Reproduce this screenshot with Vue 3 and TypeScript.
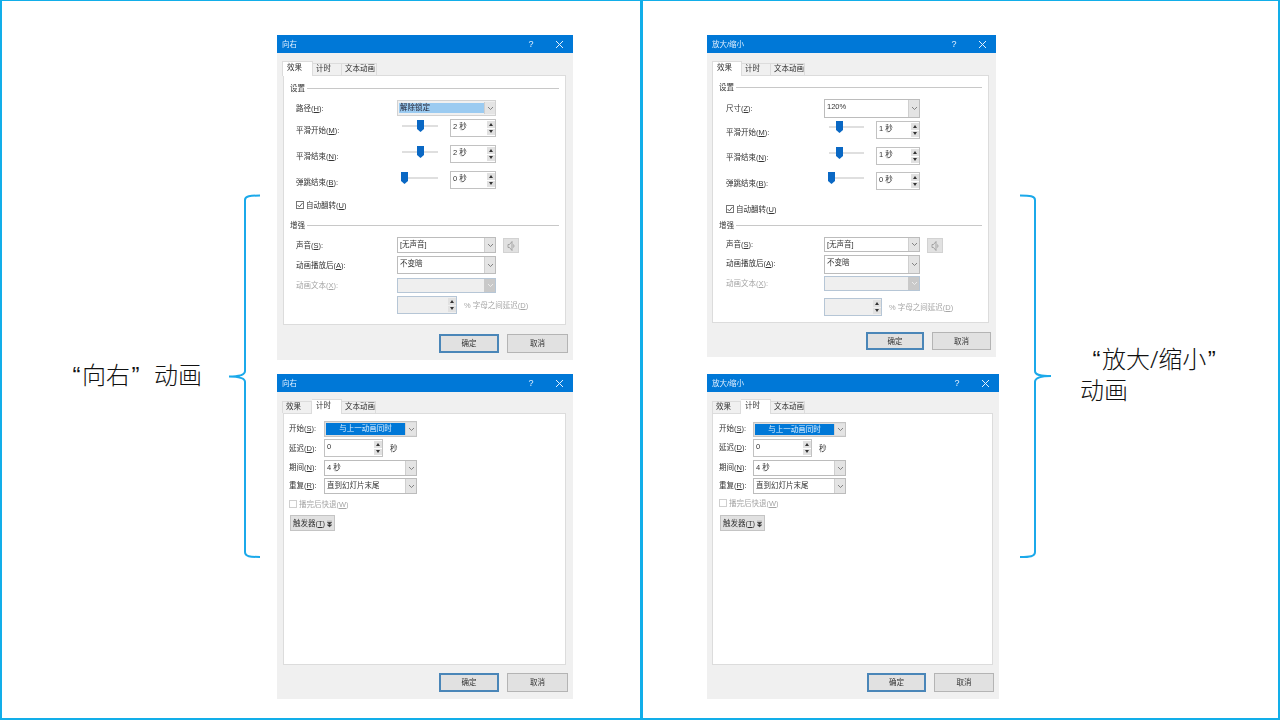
<script setup lang="ts">
type Row = {
  t: 'group' | 'combo' | 'slider' | 'check' | 'spin' | 'button'
  y: number
  h: number
  text?: string
  label?: string
  key?: string
  lab?: number
  value?: string
  kind?: 'plain' | 'sel' | 'blue' | 'off'
  w?: number
  off?: boolean
  checked?: boolean
  speaker?: boolean
  pos?: number
  trk?: number
  after?: string
  spinW?: number
}
type Dialog = {
  cls: string
  title: string
  active: number
  tabW: number[]
  panelH: number
  panelY: number
  rows: Row[]
  lx: number
  cx: number
  gx: number
  sliderW: number
  sliderGapL: number
  sliderGapR: number
  btnY: number
  btnH: number
  okW: number
  noW: number
}

const effect = (c: {
  path: Row
  y: number[]
  lab: number[]
  pos: number[]
  val: string[]
  trk: number
  check: number
  e: number[]
  labs: number[]
  wide: number
  spinX: number
  comboH: number[]
}): Row[] => [
  { t: 'group', text: '设置', y: c.e[0], h: 10 },
  c.path,
  ...c.y.map((y, i): Row => ({
    t: 'slider', y, h: 18,
    label: ['平滑开始', '平滑结束', '弹跳结束'][i],
    key: ['M', 'N', 'B'][i],
    lab: c.lab[i], pos: c.pos[i], value: c.val[i], trk: c.trk, w: c.wide,
  })),
  { t: 'check', y: c.check - 5, h: 10, label: '自动翻转', key: 'U', checked: true },
  { t: 'group', text: '增强', y: c.e[1], h: 10 },
  { t: 'combo', y: c.e[2], h: c.comboH[0], label: '声音', key: 'S', lab: c.labs[0], value: '[无声音]', kind: 'plain', speaker: true },
  { t: 'combo', y: c.e[3], h: c.comboH[1], label: '动画播放后', key: 'A', lab: c.labs[1], value: '不变暗', kind: 'plain' },
  { t: 'combo', y: c.e[4], h: c.comboH[2], label: '动画文本', key: 'X', lab: c.labs[2], value: '', kind: 'off', off: true },
  { t: 'spin', y: c.e[5], h: 18, label: '', lab: c.e[5] + 9, value: '', off: true, spinW: c.spinX, after: '% 字母之间延迟', key: 'D' },
]

const timing = (ys: number[], labs: number[]): Row[] => [
  { t: 'combo', y: ys[0], h: ys[1], label: '开始', key: 'S', lab: labs[0], value: '与上一动画同时', kind: 'blue' },
  { t: 'spin', y: ys[2], h: 18, label: '延迟', key: 'D', lab: labs[1], value: '0', spinW: 59, after: '秒' },
  { t: 'combo', y: ys[3], h: 16, label: '期间', key: 'N', lab: labs[2], value: '4 秒', kind: 'plain' },
  { t: 'combo', y: ys[4], h: 16, label: '重复', key: 'R', lab: labs[3], value: '直到幻灯片末尾', kind: 'plain' },
  { t: 'check', y: ys[5], h: 10, label: '播完后快退', key: 'W', off: true },
  { t: 'button', y: ys[6], h: 16, label: '触发器', key: 'T' },
]

const dialogs: Dialog[] = [
  {
    cls: 'd-a', title: '向右', active: 0, tabW: [31, 29, 35], panelY: 75, panelH: 250,
    lx: 13, cx: 114, gx: 7, sliderW: 36, sliderGapL: 5, sliderGapR: 12,
    btnY: 334, btnH: 19, okW: 60, noW: 61,
    rows: effect({
      path: { t: 'combo', y: 100, h: 16, label: '路径', key: 'H', lab: 108, value: '解除锁定', kind: 'sel' },
      y: [119, 145, 171], lab: [130, 156, 182], pos: [50, 50, 8], val: ['2 秒', '2 秒', '0 秒'], trk: 6,
      check: 205, e: [83, 220, 237, 256, 278, 296], labs: [245, 265, 285], wide: 46, spinX: 60, comboH: [16, 18, 15],
    }),
  },
  {
    cls: 'd-b', title: '向右', active: 1, tabW: [30, 30, 34], panelY: 413, panelH: 252,
    lx: 6, cx: 41, gx: 7, sliderW: 36, sliderGapL: 5, sliderGapR: 12,
    btnY: 673, btnH: 19, okW: 60, noW: 61,
    rows: timing([421, 16, 439, 460, 478, 499, 515], [428, 448, 467, 485]),
  },
  {
    cls: 'd-c', title: '放大/缩小', active: 0, tabW: [30, 29, 34], panelY: 75, panelH: 248,
    lx: 14, cx: 112, gx: 7, sliderW: 35, sliderGapL: 5, sliderGapR: 12,
    btnY: 332, btnH: 18, okW: 58, noW: 59,
    rows: effect({
      path: { t: 'combo', y: 99, h: 19, label: '尺寸', key: 'Z', lab: 108, value: '120%', kind: 'plain' },
      y: [121, 147, 172], lab: [132, 157, 183], pos: [30, 30, 8], val: ['1 秒', '1 秒', '0 秒'], trk: 5,
      check: 209, e: [82, 220, 237, 255, 276, 298], labs: [244, 263, 283], wide: 44, spinX: 58, comboH: [15, 19, 15],
    }),
  },
  {
    cls: 'd-d', title: '放大/缩小', active: 1, tabW: [29, 30, 34], panelY: 413, panelH: 252,
    lx: 7, cx: 41, gx: 7, sliderW: 36, sliderGapL: 5, sliderGapR: 12,
    btnY: 673, btnH: 19, okW: 59, noW: 60,
    rows: timing([422, 15, 439, 460, 478, 498, 515], [428, 447, 467, 485]),
  },
]

const tabs = ['效果', '计时', '文本动画']

const gap = (d: Dialog, i: number): number => {
  const prev = i === 0 ? d.panelY + 1 : d.rows[i - 1].y + d.rows[i - 1].h
  return d.rows[i].y - prev
}
const rowStyle = (d: Dialog, i: number) => ({
  marginTop: `${gap(d, i)}px`,
  height: `${d.rows[i].h}px`,
  paddingLeft: `${d.rows[i].t === 'group' ? d.gx - 1 : d.lx - 1}px`,
})
const footGap = (d: Dialog): number => d.btnY - (d.panelY + d.panelH)
const labTop = (r: Row): string => `${(r.lab ?? r.y + 5) - r.y - 4}px`
const labW = (d: Dialog): string => `${d.cx - d.lx}px`
</script>

<template>
  <div class="slide">
    <div class="pane pane-left"></div>
    <div class="pane pane-right"></div>

    <svg class="braces" width="1280" height="720" viewBox="0 0 1280 720">
      <path d="M260 195.500 C250 195.500 245 196 245 200 L245 371 C245 375 240 376.500 229 376.500 C240 376.500 245 378 245 382 L245 552 C245 556.500 250 557 260 557" />
      <path d="M1020 195.500 C1030 195.500 1035 196 1035 200 L1035 371 C1035 375 1040 376 1051 376 C1040 376 1035 378 1035 382 L1035 552 C1035 556.500 1030 557 1020 557" />
    </svg>

    <div class="caption cap-left"><span class="q">“</span>向右<span class="q">”</span><span class="word-gap">动画</span></div>
    <div class="caption cap-right"><span class="indent"><span class="q">“</span>放大/缩小<span class="q">”</span></span><br />动画</div>

    <section v-for="d in dialogs" :key="d.cls" class="dialog" :class="d.cls">
      <header class="titlebar">
        <span class="title">{{ d.title }}</span>
        <span class="tb-btn">?</span>
        <span class="tb-btn">
          <svg width="9" height="9" viewBox="0 0 9 9"><path d="M1 1 L8 8 M8 1 L1 8" /></svg>
        </span>
      </header>

      <nav class="tabs">
        <span
          v-for="(tab, i) in tabs"
          :key="tab"
          class="tab"
          :class="{ on: d.active === i }"
          :style="{ width: d.tabW[i] + 'px' }"
        >{{ tab }}</span>
      </nav>

      <div class="panel" :style="{ height: d.panelH + 'px' }">
        <div v-for="(r, i) in d.rows" :key="i" class="row" :style="rowStyle(d, i)">
          <template v-if="r.t === 'group'">
            <span class="group-text">{{ r.text }}</span>
            <span class="group-line"></span>
          </template>

          <template v-else-if="r.t === 'check'">
            <span class="check" :class="{ dim: r.off }">
              <svg v-if="r.checked" width="6" height="6" viewBox="0 0 6 6"><path d="M0.600 3 L2.400 4.900 L5.500 1" /></svg>
            </span>
            <span class="lab low" :class="{ dim: r.off }">{{ r.label }}(<u>{{ r.key }}</u>)</span>
          </template>

          <button v-else-if="r.t === 'button'" class="trigger" type="button">
            <span class="trigger-text">{{ r.label }}(<u>{{ r.key }}</u>)</span>
            <svg width="5" height="8" viewBox="0 0 6 8">
              <path d="M0 0.500 H6 M0 2 H6 L3 4.500 Z M0 5 H6 L3 7.500 Z" />
            </svg>
          </button>

          <template v-else>
            <span class="lab fixed" :class="{ dim: r.off }" :style="{ width: labW(d), marginTop: labTop(r) }">
              <template v-if="r.label">{{ r.label }}(<u>{{ r.key }}</u>):</template>
            </span>

            <div v-if="r.t === 'combo'" class="combo" :class="'k-' + r.kind">
              <span class="combo-val">{{ r.value }}</span>
              <span class="combo-arrow">
                <svg width="7" height="5" viewBox="0 0 7 5"><path d="M1 1 L3.500 3.500 L6 1" /></svg>
              </span>
            </div>
            <span v-if="r.speaker" class="speaker">
              <svg width="10" height="12" viewBox="0 0 10 12">
                <path d="M6 1.500 V10.500 M6 1.500 L3.500 4.500 H2 V7.500 H3.500 L6 10.500 M7.500 4.500 Q8.500 6 7.500 7.500" />
              </svg>
            </span>

            <template v-if="r.t === 'slider'">
              <div
                class="slider"
                :style="{ width: d.sliderW + 'px', marginLeft: d.sliderGapL + 'px', marginRight: d.sliderGapR + 'px', marginTop: r.trk + 'px' }"
              >
                <svg class="thumb" :style="{ left: r.pos + '%' }" width="7" height="12" viewBox="0 0 7 12">
                  <path d="M0 0 H7 V9 L3.500 12 L0 9 Z" />
                </svg>
              </div>
            </template>

            <div
              v-if="r.t === 'slider' || r.t === 'spin'"
              class="spin"
              :class="{ off: r.off }"
              :style="{ width: (r.t === 'spin' ? r.spinW : r.w) + 'px' }"
            >
              <span class="spin-val">{{ r.value }}</span>
              <span class="spin-btns">
                <span class="sb"><i class="up"></i></span>
                <span class="sb"><i class="down"></i></span>
              </span>
            </div>

            <span v-if="r.after" class="after" :class="{ dim: r.off }">
              {{ r.after }}<template v-if="r.off">(<u>{{ r.key }}</u>)</template>
            </span>
          </template>
        </div>
      </div>

      <footer class="foot" :style="{ marginTop: footGap(d) + 'px' }">
        <button class="btn ok" type="button" :style="{ width: d.okW + 'px', height: d.btnH + 'px' }">确定</button>
        <button class="btn" type="button" :style="{ width: d.noW + 'px', height: d.btnH + 'px' }">取消</button>
      </footer>
    </section>
  </div>
</template>

<style scoped>
* { box-sizing: border-box; }
.slide {
  position: relative;
  display: flex;
  width: 1280px;
  height: 720px;
  overflow: hidden;
  background: #fff;
  font-family: "Liberation Sans", "Noto Sans CJK SC", sans-serif;
  font-size: 7.500px;
  line-height: 10px;
  color: #333;
}
.pane { height: 720px; border-style: solid; border-color: #12aee9; }
.pane-left { width: 643px; border-width: 1px 3px 2px 2px; }
.pane-right { width: 637px; border-width: 1px 2px 2px 0; }

.braces { position: absolute; left: 0; top: 0; }
.braces path { fill: none; stroke: #1ba9ea; stroke-width: 2; }

.caption {
  position: absolute;
  font-family: "Noto Sans", "Noto Sans CJK SC", sans-serif;
  font-weight: 300;
  font-size: 24px;
  line-height: 30px;
  color: #111;
  white-space: nowrap;
}
.q { font-family: "Liberation Sans", sans-serif; padding: 0 1.500px; }
.cap-left { left: 71px; top: 360px; }
.cap-right { left: 1080px; top: 344px; }
.indent { margin-left: 11px; }
.word-gap { margin-left: 13px; }

.dialog { position: absolute; background: #f0f0f0; filter: blur(0.3px); }
.d-a { left: 277px; top: 35px; width: 296px; height: 325px; }
.d-b { left: 277px; top: 374px; width: 296px; height: 325px; }
.d-c { left: 707px; top: 35px; width: 289px; height: 322px; }
.d-d { left: 707px; top: 374px; width: 292px; height: 325px; }

.titlebar {
  display: flex;
  align-items: center;
  height: 18px;
  padding-left: 5px;
  background: #0078d7;
  color: #dfefff;
}
.title { flex: 1; padding-top: 1px; }
.tb-btn {
  display: flex;
  align-items: center;
  justify-content: center;
  width: 28px;
  height: 18px;
  font-size: 9px;
}
.tb-btn path { fill: none; stroke: #e6f2fc; stroke-width: 1; }

.tabs {
  display: flex;
  align-items: flex-end;
  height: 22px;
  padding-left: 5px;
}
.d-b .tabs, .d-d .tabs { height: 21px; }
.tab {
  height: 12px;
  padding-left: 3px;
  background: #f0f0f0;
  border: 1px solid #dcdcdc;
  border-bottom: 0;
  border-left: 0;
  white-space: nowrap;
  line-height: 10px;
}
.tab:first-child { padding-left: 3px; border-left: 1px solid #dcdcdc; }
.tab.on {
  position: relative;
  z-index: 1;
  height: 15px;
  margin-bottom: -1px;
  padding-top: 1px;
  padding-left: 4px;
  background: #fff;
  line-height: 10px;
}

.panel {
  display: flex;
  flex-direction: column;
  margin-left: 6px;
  margin-right: 7px;
  background: #fff;
  border: 1px solid #dcdcdc;
}
.d-c .panel, .d-d .panel { margin-left: 5px; }
.d-d .panel { margin-right: 6px; }

.row { display: flex; align-items: flex-start; padding-right: 6px; flex: none; }
.lab { height: 10px; white-space: nowrap; }
.lab.low { margin-top: 1px; }
.lab.fixed { flex: none; }
.dim { color: #a6a6a6; }
u { text-decoration: underline; text-underline-offset: 1px; }

.group-text { padding-top: 1px; line-height: 10px; width: 17px; flex: none; }
.group-line { flex: 1; height: 1px; margin-top: 5px; background: #c8c8c8; }

.check {
  display: flex;
  align-items: center;
  justify-content: center;
  width: 8px;
  height: 8px;
  margin: 1px 2px 0 0;
  border: 1px solid #777;
  background: #fff;
}
.check.dim { border-color: #cfcfcf; }
.check path { fill: none; stroke: #444; stroke-width: 0.9; }

.combo {
  display: flex;
  flex: none;
  width: 99px;
  height: 100%;
  background: #fff;
  border: 1px solid #bcbcbc;
}
.d-b .combo, .d-d .combo { width: 93px; }
.d-c .combo { width: 96px; }
.combo-val {
  flex: 1;
  padding: 2px 0 0 2px;
  white-space: nowrap;
}
.combo-arrow {
  display: flex;
  align-items: center;
  justify-content: center;
  flex: none;
  width: 11px;
  background: #e4e4e4;
  border-left: 1px solid #cfcfcf;
}
.combo-arrow path { fill: none; stroke: #6a6a6a; stroke-width: 0.8; }
.k-sel { background: #f0f0f0; border-color: #d2d2d2; padding: 1px 0 1px 1px; }
.k-sel .combo-val {
  margin: 1px 0;
  padding: 0 0 0 1px;
  background: #9bcbf1;
  color: #223;
}
.k-blue { background: #dedede; border-color: #c4c4c4; padding: 1px 0 1px 1px; }
.k-blue .combo-val {
  padding: 1px 0 0;
  background: #0078d7;
  color: #dcefff;
  text-align: center;
}
.k-off { background: #efefef; border-color: #b6c6d6; }
.k-off .combo-arrow { background: #c9c9c9; border-left-color: #c9c9c9; }
.k-off .combo-arrow path { stroke: #f4f4f4; }

.speaker {
  display: flex;
  align-items: center;
  justify-content: center;
  flex: none;
  width: 16px;
  height: 15px;
  margin: 1px 0 0 7px;
  background: #e1e1e1;
  border: 1px solid #d2d2d2;
}
.speaker path { fill: none; stroke: #8c8c8c; stroke-width: 0.7; }

.slider {
  position: relative;
  flex: none;
  height: 2px;
  background: #dfdfdf;
}
.thumb { position: absolute; top: -5px; margin-left: -3.500px; }
.thumb path { fill: #0a68c4; }

.spin {
  display: flex;
  flex: none;
  height: 100%;
  background: #fff;
  border: 1px solid #c2c2c2;
}
.spin.off { background: #efefef; border-color: #b6c6d6; }
.spin-val { flex: 1; padding: 2px 0 0 2px; white-space: nowrap; }
.spin-btns {
  display: flex;
  flex-direction: column;
  gap: 1px;
  width: 9px;
  padding: 1px;
  padding-right: 0;
  background: #fff;
}
.spin.off .spin-btns { background: #efefef; }
.sb {
  display: flex;
  flex: 1;
  align-items: center;
  justify-content: center;
  background: #e1e1e1;
}
.spin-btns i { width: 0; height: 0; border-left: 2px solid transparent; border-right: 2px solid transparent; }
.spin-btns .up { border-bottom: 3px solid #333; }
.spin-btns .down { border-top: 3px solid #333; }
.after { margin: 5px 0 0 7px; white-space: nowrap; }

.trigger {
  display: flex;
  align-items: center;
  gap: 2px;
  width: 45px;
  height: 16px;
  margin-left: 1px;
  padding: 1px 0 0 2px;
  background: #e1e1e1;
  border: 1px solid #c4c4c4;
  font: inherit;
  color: inherit;
}
.trigger-text { white-space: nowrap; }
.trigger path { fill: #333; stroke: #333; stroke-width: 0.3; }

.foot {
  display: flex;
  justify-content: flex-end;
  gap: 8px;
  padding-right: 5px;
}
.btn {
  padding: 1px 0 0;
  background: #e1e1e1;
  border: 1px solid #b4b4b4;
  font: inherit;
  color: inherit;
}
.btn.ok { border: 2px solid #4a86b8; }
</style>

<style>
html, body { margin: 0; background: #fff; }
</style>
